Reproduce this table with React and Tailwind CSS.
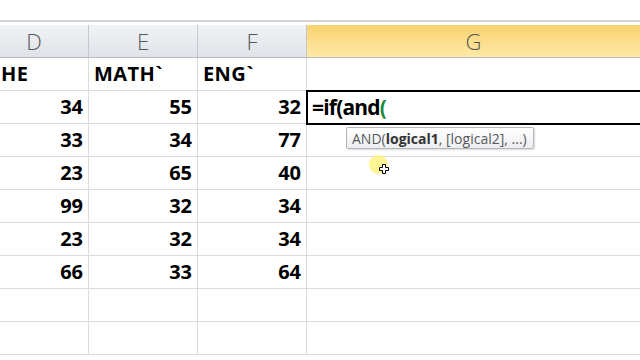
import React from "react";

const rows = [
  ["34", "55", "32"],
  ["33", "34", "77"],
  ["23", "65", "40"],
  ["99", "32", "34"],
  ["23", "32", "34"],
  ["66", "33", "64"],
  ["", "", ""],
  ["", "", ""],
];

const font = { fontFamily: "'Open Sans', 'Liberation Sans', sans-serif" };

export default function App() {
  return (
    <div className="w-[640px] h-[360px] overflow-hidden bg-white relative" style={font}>
      <div className="h-[20px] bg-white" />
      <div className="h-[2px] bg-[#d4d6d9]" />
      <div className="h-[3px] bg-white" />
      {/* header row */}
      <div className="flex h-[33px] border-b border-[#b8bcc2] -ml-[20px]">
        <div className="w-[109px] shrink-0 flex items-center justify-center bg-gradient-to-b from-[#f1f3f6] to-[#dfe3e8] border-r border-[#c5c9cf] text-[22px] font-light text-[#555]">D</div>
        <div className="w-[109px] shrink-0 flex items-center justify-center bg-gradient-to-b from-[#f1f3f6] to-[#dfe3e8] border-r border-[#c5c9cf] text-[22px] font-light text-[#555]">E</div>
        <div className="w-[109px] shrink-0 flex items-center justify-center bg-gradient-to-b from-[#f1f3f6] to-[#dfe3e8] border-r border-[#c5c9cf] text-[22px] font-light text-[#555]">F</div>
        <div className="flex-1 flex items-center justify-center bg-gradient-to-b from-[#f9d36e] to-[#fde9a6] text-[22px] font-light text-[#555]">G</div>
      </div>
      {/* names row */}
      <div className="flex h-[33px] border-b border-[#dadcdd] text-[20px] font-bold text-black tracking-[0.4px]">
        <div className="w-[89px] shrink-0 flex items-center border-r border-[#dadcdd] pl-[1px]">HE</div>
        <div className="w-[109px] shrink-0 flex items-center border-r border-[#dadcdd] pl-[5px]">MATH`</div>
        <div className="w-[109px] shrink-0 flex items-center border-r border-[#dadcdd] pl-[5px]">ENG`</div>
        <div className="flex-1" />
      </div>
      {rows.map((r, i) => (
        <div key={i} className="flex h-[33px] border-b border-[#dadcdd] text-[20px] font-bold text-black">
          <div className="w-[89px] shrink-0 flex items-center justify-end border-r border-[#dadcdd] pr-[5px]">{r[0]}</div>
          <div className="w-[109px] shrink-0 flex items-center justify-end border-r border-[#dadcdd] pr-[5px]">{r[1]}</div>
          <div className="w-[109px] shrink-0 flex items-center justify-end border-r border-[#dadcdd] pr-[5px]">{r[2]}</div>
          <div className="flex-1" />
        </div>
      ))}
      {/* active cell */}
      <div className="absolute left-[306px] top-[90px] w-[340px] h-[35px] border-2 border-black bg-white flex items-center pl-[4px] text-[21px] font-bold text-black tracking-[-0.8px]">
        =if(and<span className="text-[#1f8a3c]">(</span>
      </div>
      {/* tooltip */}
      <div className="absolute left-[346px] top-[127px] h-[22px] w-[188px] pl-[5px] flex items-center bg-gradient-to-b from-white to-[#eceef1] border border-[#b3b6bb] rounded-[2px] shadow-[1px_1px_2px_rgba(0,0,0,0.15)] text-[14px] text-[#5a5a5a] whitespace-nowrap">
        AND(<b className="text-[#333]">logical1</b>, [logical2], ...)
      </div>
      {/* cursor highlight */}
      <div className="absolute left-[369px] top-[155px] w-[19px] h-[19px] rounded-full bg-[#fff27a] opacity-80" />
      <svg className="absolute left-[379px] top-[164px]" width="10" height="10" viewBox="0 0 10 10">
        <path d="M3.5 0.5h3v3h3v3h-3v3h-3v-3h-3v-3h3z" fill="white" stroke="black" strokeWidth="1" />
      </svg>
    </div>
  );
}
